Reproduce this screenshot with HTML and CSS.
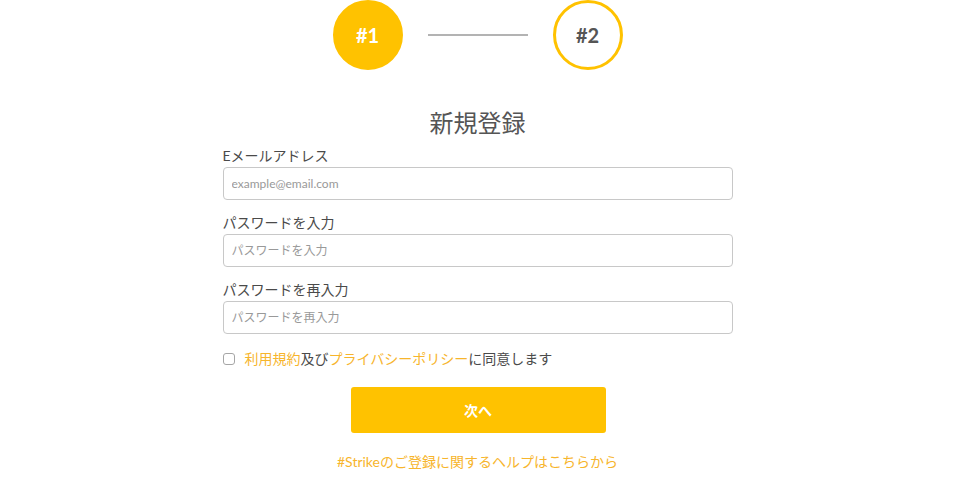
FILE: index.html
```html
<!DOCTYPE html>
<html lang="ja">
<head>
    <meta charset="UTF-8">
    <meta name="viewport" content="width=device-width, initial-scale=1.0">
    <title>新規登録</title>
    <link rel="stylesheet" href="styles.css">
</head>
<body>
    <div class="page">
        <div class="steps">
            <div class="step active">#1</div>
            <div class="step-line"></div>
            <div class="step">#2</div>
        </div>
        <h1 class="title">新規登録</h1>
        <form class="signup">
            <label class="field">
                <span class="label">Eメールアドレス</span>
                <input type="email" placeholder="example@email.com">
            </label>
            <label class="field">
                <span class="label">パスワードを入力</span>
                <input type="password" placeholder="パスワードを入力">
            </label>
            <label class="field">
                <span class="label">パスワードを再入力</span>
                <input type="password" placeholder="パスワードを再入力">
            </label>
            <div class="agree">
                <input type="checkbox" id="agree">
                <label for="agree"><a href="#">利用規約</a>及び<a href="#">プライバシーポリシー</a>に同意します</label>
            </div>
            <button type="button" class="next">次へ</button>
            <a href="#" class="help">#Strikeのご登録に関するヘルプはこちらから</a>
        </form>
    </div>
</body>
</html>
```

FILE: styles.css
```css
body {
    margin: 0;
    padding: 0;
    background: #fff;
    font-family: Lato, "Noto Sans CJK JP", sans-serif;
    color: #4a4a4a;
}
.page {
    width: 955px;
    display: flex;
    flex-direction: column;
    align-items: center;
}
.steps {
    display: flex;
    align-items: center;
    gap: 25px;
}
.step {
    width: 64px;
    height: 64px;
    border: 3px solid #ffc200;
    border-radius: 50%;
    display: flex;
    align-items: center;
    justify-content: center;
    font-size: 20px;
    font-weight: bold;
    color: #555;
}
.step.active {
    background: #ffc200;
    color: #fff;
}
.step-line {
    width: 100px;
    height: 2px;
    background: #b3b3b3;
}
.title {
    margin: 36px 0 0;
    font-size: 24px;
    font-weight: normal;
    line-height: 34px;
    color: #555;
}
.signup {
    width: 510px;
    display: flex;
    flex-direction: column;
    margin-top: 6px;
}
.field {
    display: flex;
    flex-direction: column;
    gap: 1px;
    margin-bottom: 13px;
}
.label {
    font-size: 14px;
    line-height: 20px;
    color: #4a4a4a;
}
.field input {
    box-sizing: border-box;
    height: 33px;
    border: 1px solid #c8c8c8;
    border-radius: 4px;
    padding: 0 8px;
    font-family: inherit;
    font-size: 12px;
    color: #4a4a4a;
}
.field input::placeholder {
    color: #999;
}
.agree {
    display: flex;
    align-items: center;
    font-size: 14px;
    line-height: 20px;
    margin-top: 2px;
}
.agree input {
    appearance: none;
    box-sizing: border-box;
    margin: 0 10px 0 0;
    width: 12px;
    height: 12px;
    border: 1px solid #a6a6a6;
    border-radius: 3px;
    background: #fff;
}
.agree input:checked {
    background: #ffc200;
    border-color: #ffc200;
}
.agree a {
    color: #f7b52c;
    text-decoration: none;
}
.next {
    width: 255px;
    height: 46px;
    margin: 18px 0 0 128px;
    border: none;
    border-radius: 3px;
    background: #ffc200;
    color: #fff;
    font-family: inherit;
    font-size: 14px;
    font-weight: bold;
}
.help {
    align-self: center;
    margin-top: 19px;
    font-size: 14px;
    line-height: 20px;
    color: #f7b52c;
    text-decoration: none;
}
```
